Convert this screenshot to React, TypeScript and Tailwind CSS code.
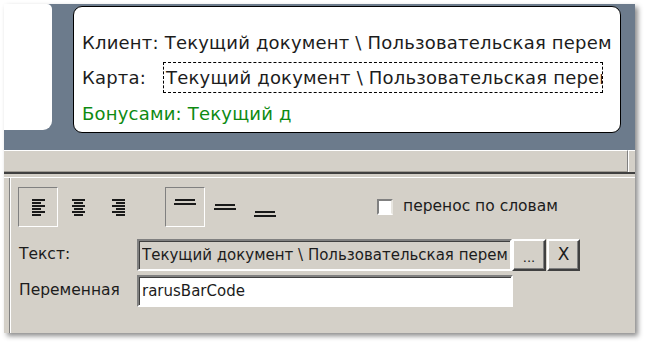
import React from 'react'

function AlignIcon({ mode }: { mode: 'left' | 'center' | 'right' }) {
  const rows = [0, 3, 6, 9, 12, 15]
  return (
    <svg width="13" height="17" viewBox="0 0 13 17">
      {rows.map((y, i) => {
        const w = i % 2 === 0 ? 13 : 9
        const x = mode === 'left' ? 0 : mode === 'right' ? 13 - w : (13 - w) / 2
        return <rect key={y} x={x} y={y} width={w} height={2} fill="#1a1a1a" />
      })}
    </svg>
  )
}

function VAlignIcon({ top }: { top: number }) {
  return (
    <svg width="24" height="26" viewBox="0 0 24 26">
      <rect x={2} y={top} width={20} height={2} fill="#1a1a1a" />
      <rect x={1} y={top + 4} width={22} height={2} fill="#1a1a1a" />
    </svg>
  )
}

const sunken = 'border-2 border-t-[#808080] border-l-[#808080] border-b-white border-r-white shadow-[inset_1px_1px_0_#404040]'
const raised = 'border-2 border-t-white border-l-white border-b-[#404040] border-r-[#404040] shadow-[inset_-1px_-1px_0_#808080]'
const pressed = 'border border-t-[#808080] border-l-[#808080] border-b-white border-r-white'

export default function App() {
  return (
    <div className="w-[648px] h-[348px] bg-white pl-[4px] pt-[4px] font-['DejaVu_Sans',sans-serif] text-[15.5px] text-[#1c1c1c]">
      <div className="w-[631px] h-[329px] flex flex-col bg-[#d4d0c8] shadow-[3px_3px_5px_rgba(0,0,0,0.45)]">
        {/* designer canvas */}
        <div className="h-[146px] bg-[#6c7b8c] flex overflow-hidden">
          <div className="w-[48px] h-[126px] bg-white rounded-tr-[5px] rounded-br-[9px]" />
          <div className="ml-[21px] mt-[2px] w-[548px] h-[127px] bg-white border border-black rounded-[9px] pl-[8px] pr-[8px] pt-[23px] flex flex-col text-[18px] tracking-[0.2px]">
            <div className="h-[24px] flex items-center whitespace-nowrap overflow-hidden">
              Клиент: Текущий документ \ Пользовательская переменная
            </div>
            <div className="h-[31px] mt-[8px] flex items-center whitespace-nowrap">
              <span className="w-[81px] shrink-0">Карта:</span>
              <div className="w-[440px] h-[31px] border border-dashed border-black flex items-center pl-[2px] overflow-hidden">
                Текущий документ \ Пользовательская переменная
              </div>
            </div>
            <div className="h-[24px] mt-[8px] flex items-center whitespace-nowrap text-[#0e8a12]">
              <span className="w-[210px] overflow-hidden">Бонусами: Текущий документ</span>
            </div>
          </div>
        </div>

        {/* scroll band */}
        <div className="h-[22px] flex">
          <div className="flex-1 border-t border-t-white border-r border-r-[#808080] border-b border-b-[#a09c94]" />
          <div className="w-[7px] border-l border-l-white border-t border-t-white" />
        </div>
        <div className="h-[2px] bg-[#404040]" />
        <div className="h-[3px]" />

        {/* properties panel */}
        <div className="flex-1 border-t border-t-white">
          <div className="ml-[5px] h-full border-l border-l-[#808080]">
            <div className="h-full border-l border-l-white pt-[9px]">
              <div className="flex items-center h-[40px] pl-[7px]">
                <div className={`w-[40px] h-[40px] ${pressed} flex items-center justify-center`}>
                  <AlignIcon mode="left" />
                </div>
                <div className="w-[40px] h-[40px] flex items-center justify-center">
                  <AlignIcon mode="center" />
                </div>
                <div className="w-[40px] h-[40px] flex items-center justify-center">
                  <AlignIcon mode="right" />
                </div>
                <div className={`ml-[27px] w-[40px] h-[40px] ${pressed} flex items-center justify-center`}>
                  <VAlignIcon top={5} />
                </div>
                <div className="w-[40px] h-[40px] flex items-center justify-center">
                  <VAlignIcon top={10} />
                </div>
                <div className="w-[40px] h-[40px] flex items-center justify-center">
                  <VAlignIcon top={17} />
                </div>
                <div className="ml-[92px] w-[16px] h-[16px] bg-white border-2 border-t-[#808080] border-l-[#808080] border-b-white border-r-[#e8e6e0]" />
                <span className="ml-[10px]">перенос по словам</span>
              </div>

              <div className="flex items-center h-[32px] mt-[12px]">
                <span className="w-[126px] pl-[8px] shrink-0">Текст:</span>
                <div className={`w-[375px] h-[32px] ${sunken} flex items-center pl-[3px] overflow-hidden text-[15px]`}>
                  <span className="w-[366px] whitespace-nowrap overflow-hidden">Текущий документ \ Пользовательская переменная</span>
                </div>
                <div className={`w-[34px] h-[32px] ${raised} flex items-center justify-center text-[13px] leading-none pt-[4px]`}>...</div>
                <div className={`ml-[1px] w-[33px] h-[32px] ${raised} flex items-center justify-center text-[17px]`}>X</div>
              </div>

              <div className="flex items-center h-[32px] mt-[4px]">
                <span className="w-[126px] pl-[8px] shrink-0">Переменная</span>
                <div className={`w-[376px] h-[32px] ${sunken} bg-white flex items-center pl-[3px] whitespace-nowrap overflow-hidden text-[15px]`}>
                  rarusBarCode
                </div>
              </div>
            </div>
          </div>
        </div>
      </div>
    </div>
  )
}
